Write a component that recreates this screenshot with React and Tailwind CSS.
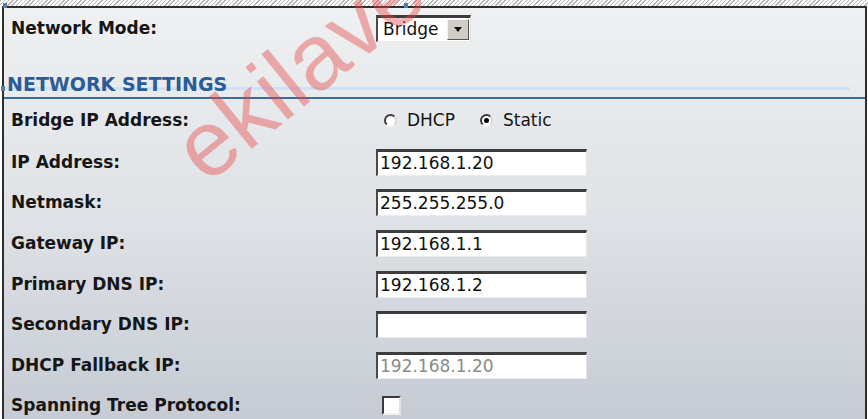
// App.jsx — router "Network" settings panel (bridge mode)

const fields = [
  { label: "IP Address:", value: "192.168.1.20" },
  { label: "Netmask:", value: "255.255.255.0" },
  { label: "Gateway IP:", value: "192.168.1.1" },
  { label: "Primary DNS IP:", value: "192.168.1.2" },
  { label: "Secondary DNS IP:", value: "" },
  { label: "DHCP Fallback IP:", value: "192.168.1.20", disabled: true },
];

function Label({ children }) {
  return (
    <div className="w-[372px] shrink-0 pl-[7px] text-[17px] font-bold text-[#161616] leading-none">
      {children}
    </div>
  );
}

function TextBox({ value, disabled }) {
  return (
    <div className="w-[211px] h-[27px] bg-white border-t-[3px] border-l-2 border-r border-b border-t-[#3c3c3c] border-l-[#4a4a4a] border-r-[#e4e4e4] border-b-[#ececec] flex items-center pl-[2px]">
      <span className={`text-[17px] leading-none ${disabled ? "text-[#8a8a8a]" : "text-[#111]"}`}>
        {value}
      </span>
    </div>
  );
}

function Radio({ checked }) {
  return (
    <span className="w-[13px] h-[13px] rounded-full bg-white border-2 border-t-[#3a3a3a] border-l-[#3a3a3a] border-r-[#d8d8d8] border-b-[#f4f4f4] flex items-center justify-center">
      {checked && <span className="w-[5px] h-[5px] rounded-full bg-black" />}
    </span>
  );
}

export default function App() {
  return (
    <div className="relative w-[868px] h-[419px] overflow-hidden font-['DejaVu_Sans',sans-serif] bg-white">
      {/* dotted frame strip */}
      <div className="h-[6px] bg-[repeating-linear-gradient(135deg,#b4b4b4_0px,#b4b4b4_1px,#ffffff_1px,#ffffff_3px)]" />

      <div className="ml-[2px] mr-[1px] h-[420px] border-t-2 border-l-2 border-r-2 border-[#2e2e2e] bg-[linear-gradient(to_bottom,#eef0f1,#dfe2e6_50%,#c5cad3)] flex flex-col">
        {/* Network mode */}
        <div className="h-[41px] shrink-0 flex items-center">
          <Label>Network Mode:</Label>
          <div className="w-[95px] h-[27px] bg-white border-t-[3px] border-l-2 border-r border-b border-t-[#3c3c3c] border-l-[#4a4a4a] border-r-[#e4e4e4] border-b-[#ececec] flex items-center justify-between pl-[5px] pr-[1px]">
            <span className="text-[17px] leading-none text-[#111]">Bridge</span>
            <span className="w-[22px] h-[21px] bg-[#cfcdc6] border border-t-[#f4f4f0] border-l-[#f4f4f0] border-r-[#555] border-b-[#555] flex items-center justify-center">
              <svg width="8" height="5" viewBox="0 0 8 5">
                <path d="M0 0 H8 L4 5 Z" fill="#111" />
              </svg>
            </span>
          </div>
        </div>

        {/* section heading */}
        <div className="h-[50px] shrink-0 flex flex-col justify-end">
          <div className="h-[30px] flex items-center pl-[3px] pt-[2px] border-b-2 border-[#3f6b94] bg-[linear-gradient(to_bottom,transparent_0px,transparent_18px,#cfe1f3_18px,#cfe1f3_21px,transparent_21px)] bg-no-repeat bg-[length:846px_100%]">
            <span className="text-[19px] font-bold text-[#2c5c96] leading-none">NETWORK SETTINGS</span>
          </div>
        </div>

        {/* bridge ip mode */}
        <div className="h-[43px] shrink-0 flex items-center">
          <Label>Bridge IP Address:</Label>
          <div className="flex items-center pl-[8px] text-[17px] text-[#141414] leading-none">
            <Radio />
            <span className="ml-[10px]">DHCP</span>
            <span className="ml-[25px]"><Radio checked /></span>
            <span className="ml-[10px]">Static</span>
          </div>
        </div>

        {fields.map((f) => (
          <div key={f.label} className="h-[40.6px] shrink-0 flex items-center">
            <Label>{f.label}</Label>
            <TextBox value={f.value} disabled={f.disabled} />
          </div>
        ))}

        <div className="h-[40.6px] shrink-0 flex items-center">
          <Label>Spanning Tree Protocol:</Label>
          <span className="ml-[6px] w-[19px] h-[19px] bg-white border-2 border-t-[#3a3a3a] border-l-[#3a3a3a] border-r-[#e0e0e0] border-b-[#f0f0f0]" />
        </div>
      </div>

      {/* selection handles */}
      <span className="absolute left-[3px] top-[3px] w-[4px] h-[5px] bg-[#5b7aa6]" />
      <span className="absolute left-[404px] top-[3px] w-[4px] h-[5px] bg-[#5b7aa6]" />
      <span className="absolute left-[1px] top-[86px] w-[4px] h-[5px] bg-[#5b7aa6]" />

      {/* watermark */}
      <span className="pointer-events-none absolute left-[216px] top-[104px] origin-bottom-left -rotate-[39deg] text-[93px] leading-none font-['Liberation_Sans',sans-serif] text-[rgba(232,70,70,0.42)] whitespace-nowrap">
        ekilave
      </span>
    </div>
  );
}
